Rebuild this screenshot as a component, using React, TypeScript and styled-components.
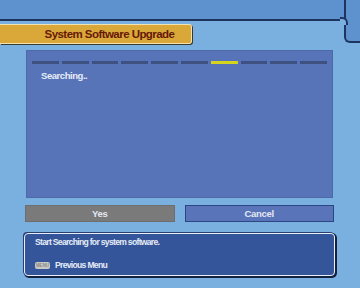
import React from "react";
import styled, { createGlobalStyle } from "styled-components";

const GlobalStyle = createGlobalStyle`
  html, body {
    margin: 0;
    padding: 0;
    background: #79b0e0;
  }
  * {
    box-sizing: border-box;
  }
`;

const Screen = styled.div`
  width: 360px;
  height: 288px;
  background: #79b0e0;
  display: flex;
  flex-direction: column;
  overflow: hidden;
  font-family: "Liberation Sans", Arial, sans-serif;
  font-weight: bold;
`;

const Header = styled.div`
  display: flex;
  height: 21px;
  flex-shrink: 0;
`;

const HeaderBar = styled.div`
  flex: 1;
  height: 21px;
  background: #5e92ce;
  border-bottom: 2px solid #1d355e;
  position: relative;
  &::after {
    content: "";
    position: absolute;
    right: -2px;
    bottom: -6px;
    width: 6px;
    height: 6px;
    background: #79b0e0;
    border-top: 2px solid #1d355e;
    border-right: 2px solid #1d355e;
    border-top-right-radius: 6px;
    z-index: 2;
  }
`;

const HeaderTab = styled.div`
  width: 16px;
  height: 43px;
  flex-shrink: 0;
  margin-left: -2px;
  background: #5e92ce;
  border-left: 2px solid #1d355e;
  border-bottom: 2px solid #1d355e;
  border-bottom-left-radius: 6px;
  position: relative;
  z-index: 1;
`;

const TitleBar = styled.div`
  margin-top: 3px;
  width: 192px;
  height: 20px;
  background: #d9a838;
  border: 1px solid #f3e3b3;
  border-left: none;
  border-radius: 0 3px 3px 0;
  box-shadow: 1px 1px 0 #3a3a2a;
  display: flex;
  align-items: center;
  justify-content: center;
  padding-left: 28px;
  color: #661809;
  font-size: 11.5px;
  letter-spacing: -0.55px;
`;

const Panel = styled.div`
  margin: 6px 0 0 26px;
  width: 307px;
  height: 148px;
  background: #5874b9;
  border: 1px solid #4e69ab;
  padding: 10px 5px 0 5px;
  display: flex;
  flex-direction: column;
`;

const Dashes = styled.div`
  display: grid;
  grid-template-columns: repeat(10, 1fr);
  column-gap: 3px;
`;

const Dash = styled.div<{ $active?: boolean }>`
  height: 3px;
  background: ${(p) => (p.$active ? "#d6d51e" : "#3e5180")};
`;

const Status = styled.div`
  margin: 6px 0 0 9px;
  color: #e6ecf6;
  font-size: 9.5px;
  letter-spacing: -0.45px;
`;

const ButtonRow = styled.div`
  display: flex;
  gap: 10px;
  margin: 7px 0 0 25px;
  width: 309px;
`;

const Button = styled.div<{ $focused?: boolean }>`
  flex: 1;
  height: 17px;
  display: flex;
  align-items: center;
  justify-content: center;
  font-size: 9.5px;
  letter-spacing: -0.3px;
  color: #e2e8f2;
  background: ${(p) => (p.$focused ? "#5a74ba" : "#7a7a7a")};
  border: 1px solid ${(p) => (p.$focused ? "#2c4683" : "#6e6e6e")};
`;

const InfoBox = styled.div`
  margin: 11px 0 0 24px;
  width: 311px;
  height: 43px;
  background: #34559a;
  border: 1px solid #e8eef6;
  border-radius: 4px;
  box-shadow: 1px 1px 0 1px #13203f, -1px -1px 0 0 #2a3f70;
  padding: 3px 0 5px 10px;
  display: flex;
  flex-direction: column;
  justify-content: space-between;
  color: #e6ecf6;
  font-size: 8.6px;
  letter-spacing: -0.7px;
`;

const HintRow = styled.div`
  display: flex;
  align-items: center;
  gap: 5px;
`;

const KeyPill = styled.span`
  width: 15px;
  height: 7px;
  border-radius: 2px;
  background: #c9c9c4;
  color: #8a8a88;
  font-size: 4.5px;
  letter-spacing: 0;
  display: flex;
  align-items: center;
  justify-content: center;
`;

export default function App() {
  const steps = Array.from({ length: 10 }, (_, i) => i);
  return (
    <>
      <GlobalStyle />
      <Screen>
        <Header>
          <HeaderBar />
          <HeaderTab />
        </Header>
        <TitleBar>System Software Upgrade</TitleBar>
        <Panel>
          <Dashes>
            {steps.map((i) => (
              <Dash key={i} $active={i === 6} />
            ))}
          </Dashes>
          <Status>Searching..</Status>
        </Panel>
        <ButtonRow>
          <Button>Yes</Button>
          <Button $focused>Cancel</Button>
        </ButtonRow>
        <InfoBox>
          <div>Start Searching for system software.</div>
          <HintRow>
            <KeyPill>MENU</KeyPill>
            <span>Previous Menu</span>
          </HintRow>
        </InfoBox>
      </Screen>
    </>
  );
}
